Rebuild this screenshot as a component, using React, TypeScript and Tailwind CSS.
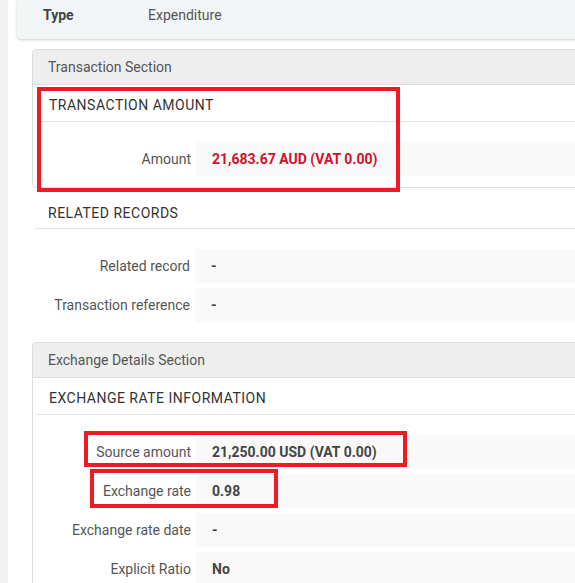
import React from 'react';

type Field = { label: string; value: string; tone?: 'red' | 'plain' };

const font = { fontFamily: 'Roboto, "Liberation Sans", sans-serif' };

const FieldRow: React.FC<{ field: Field }> = ({ field }) => (
  <div className="flex h-[34px] items-center">
    <div className="w-[160px] shrink-0 pr-[5px] text-right text-[14px] text-[#555]">{field.label}</div>
    <div
      className={
        'flex h-full flex-1 items-center bg-[#f9f9f9] pl-[16px] text-[14px] font-bold ' +
        (field.tone === 'red' ? 'text-[#d0112b]' : 'text-[#444]')
      }
    >
      {field.value}
    </div>
  </div>
);

const Group: React.FC<{ title: string; fields: Field[]; head?: string; bottom?: string }> = ({
  title,
  fields,
  head = 'h-[37px] pt-[4px]',
  bottom = 'pb-[11px]',
}) => (
  <div className={'px-[3px] ' + bottom}>
    <div className={'flex items-center border-b border-[#e3e3e3] pl-[13px] text-[14px] uppercase tracking-[0.5px] text-[#333] ' + head}>
      {title}
    </div>
    <div className="flex flex-col gap-[5px] pt-[20px]">
      {fields.map((f) => (
        <FieldRow key={f.label} field={f} />
      ))}
    </div>
  </div>
);

const Panel: React.FC<{ title: string; children: React.ReactNode }> = ({ title, children }) => (
  <div className="w-[700px] rounded-l-[4px] border border-[#dcdcdc] bg-white">
    <div className="flex h-[35px] items-center rounded-tl-[4px] border-b border-[#dcdcdc] bg-[#eeeeee] pl-[15px] text-[14px] text-[#555]">
      {title}
    </div>
    {children}
  </div>
);

export default function App() {
  return (
    <div className="relative flex h-[583px] w-[575px] overflow-hidden bg-white" style={font}>
      <div className="w-[8px] shrink-0 bg-[#f2f2f2]" />

      <div className="flex-1">
        {/* record summary card */}
        <div className="ml-[9px] flex h-[39px] w-[700px] items-center rounded-bl-[4px] bg-[#f3f6f7] pb-[9px] pl-[26px] text-[14px] shadow-[0_1px_3px_rgba(0,0,0,0.2)]">
          <span className="w-[105px] font-bold text-[#444]">Type</span>
          <span className="text-[#555]">Expenditure</span>
        </div>

        <div className="ml-[24px] mt-[10px]">
          <Panel title="Transaction Section">
            <Group
              title="Transaction Amount"
              fields={[{ label: 'Amount', value: '21,683.67 AUD (VAT 0.00)', tone: 'red' }]}
            />
          </Panel>

          <Group
            title="Related Records"
            head="h-[41px] pt-[10px]"
            bottom="pb-[20px]"
            fields={[
              { label: 'Related record', value: '-' },
              { label: 'Transaction reference', value: '-' },
            ]}
          />

          <Panel title="Exchange Details Section">
            <Group
              title="Exchange Rate Information"
              fields={[
                { label: 'Source amount', value: '21,250.00 USD (VAT 0.00)' },
                { label: 'Exchange rate', value: '0.98' },
                { label: 'Exchange rate date', value: '-' },
                { label: 'Explicit Ratio', value: 'No' },
              ]}
            />
          </Panel>
        </div>
      </div>

      {/* highlight boxes drawn over the form */}
      <div className="pointer-events-none absolute left-[37px] top-[87px] h-[105px] w-[363px] border-[4px] border-[#ed1c24]" />
      <div className="pointer-events-none absolute left-[84px] top-[431px] h-[36px] w-[323px] border-[4px] border-[#ed1c24]" />
      <div className="pointer-events-none absolute left-[90px] top-[469px] h-[39px] w-[188px] border-[4px] border-[#ed1c24]" />
    </div>
  );
}
